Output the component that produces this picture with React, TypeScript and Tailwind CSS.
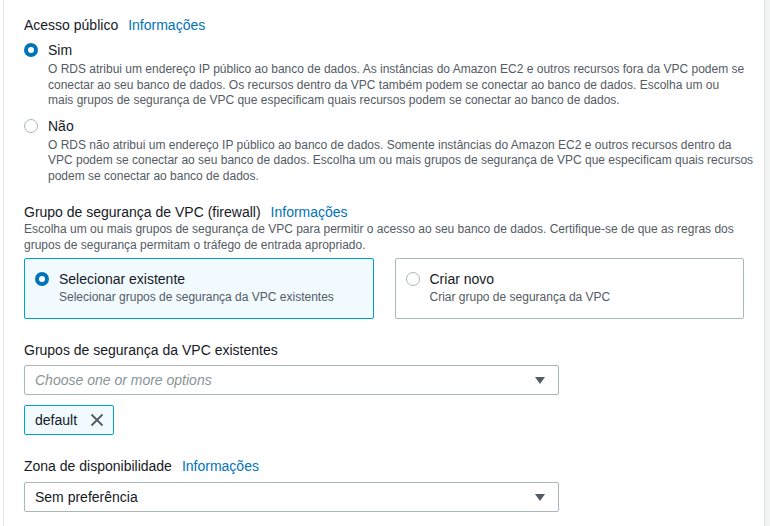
import React from 'react';

const font = { fontFamily: '"Liberation Sans", Arial, sans-serif' };

function Radio({ checked }: { checked: boolean }) {
  return checked ? (
    <span className="block h-[14px] w-[14px] shrink-0 rounded-full border-[4px] border-[#0073bb] bg-white" />
  ) : (
    <span className="block h-[14px] w-[14px] shrink-0 rounded-full border-[1.5px] border-[#aab7b8] bg-white" />
  );
}

function Info() {
  return <a className="ml-[10px] text-[#0073bb]">Informações</a>;
}

function Caret() {
  return (
    <svg width="10" height="7" viewBox="0 0 10 7" className="shrink-0">
      <path d="M0 0 H10 L5 7 Z" fill="#545b64" />
    </svg>
  );
}

export default function App() {
  return (
    <div className="flex h-[526px] w-[770px] overflow-hidden bg-white text-[#16191f]" style={font}>
      <div className="w-[3px] shrink-0 bg-white" />
      <div className="flex w-[762px] shrink-0 flex-col border-x border-[#e1e4e4] pl-[20px] pt-[15px]">
        {/* Acesso público */}
        <div className="text-[14px] leading-[20px]">
          Acesso público<Info />
        </div>
        <div className="mt-[5px] flex flex-col">
          <div className="flex items-start gap-[10px]">
            <div className="flex pt-[3px]"><Radio checked /></div>
            <div>
              <div className="text-[14px] leading-[20px]">Sim</div>
              <div className="mt-[2px] whitespace-nowrap text-[12px] leading-[15.5px] text-[#545b64]">
                O RDS atribui um endereço IP público ao banco de dados. As instâncias do Amazon EC2 e outros recursos fora da VPC podem se<br />
                conectar ao seu banco de dados. Os recursos dentro da VPC também podem se conectar ao banco de dados. Escolha um ou<br />
                mais grupos de segurança de VPC que especificam quais recursos podem se conectar ao banco de dados.
              </div>
            </div>
          </div>
          <div className="mt-[7px] flex items-start gap-[10px]">
            <div className="flex pt-[3px]"><Radio checked={false} /></div>
            <div>
              <div className="text-[14px] leading-[20px]">Não</div>
              <div className="mt-[2px] whitespace-nowrap text-[12px] leading-[15.5px] text-[#545b64]">
                O RDS não atribui um endereço IP público ao banco de dados. Somente instâncias do Amazon EC2 e outros recursos dentro da<br />
                VPC podem se conectar ao seu banco de dados. Escolha um ou mais grupos de segurança de VPC que especificam quais recursos<br />
                podem se conectar ao banco de dados.
              </div>
            </div>
          </div>
        </div>

        {/* Grupo de segurança */}
        <div className="mt-[18px] text-[14px] leading-[20px]">
          Grupo de segurança de VPC (firewall)<Info />
        </div>
        <div className="whitespace-nowrap text-[12px] leading-[15.5px] text-[#545b64]">
          Escolha um ou mais grupos de segurança de VPC para permitir o acesso ao seu banco de dados. Certifique-se de que as regras dos<br />
          grupos de segurança permitam o tráfego de entrada apropriado.
        </div>
        <div className="mt-[5px] grid w-[720px] grid-cols-2 gap-[21px]">
          <div className="flex h-[61px] items-start gap-[10px] rounded-[2px] border border-[#00a1c9] bg-[#f1faff] px-[10px] pt-[10px]">
            <div className="flex pt-[3px]"><Radio checked /></div>
            <div>
              <div className="text-[14px] leading-[20px]">Selecionar existente</div>
              <div className="text-[12px] leading-[16px] text-[#545b64]">Selecionar grupos de segurança da VPC existentes</div>
            </div>
          </div>
          <div className="flex h-[61px] items-start gap-[10px] rounded-[2px] border border-[#aab7b8] bg-white px-[10px] pt-[10px]">
            <div className="flex pt-[3px]"><Radio checked={false} /></div>
            <div>
              <div className="text-[14px] leading-[20px]">Criar novo</div>
              <div className="text-[12px] leading-[16px] text-[#545b64]">Criar grupo de segurança da VPC</div>
            </div>
          </div>
        </div>

        {/* Grupos existentes */}
        <div className="mt-[21px] text-[14px] leading-[20px]">Grupos de segurança da VPC existentes</div>
        <div className="mt-[5px] flex h-[30px] w-[535px] items-center justify-between rounded-[2px] border border-[#aab7b8] pl-[10px] pr-[13px]">
          <span className="text-[14px] italic text-[#879596]">Choose one or more options</span>
          <Caret />
        </div>
        <div className="mt-[10px] flex">
          <div className="flex h-[30px] items-center gap-[13px] rounded-[2px] border border-[#00a1c9] bg-[#f1faff] pl-[10px] pr-[9px]">
            <span className="text-[14px]">default</span>
            <svg width="14" height="14" viewBox="0 0 14 14">
              <path d="M1.5 1.5 L12.5 12.5 M12.5 1.5 L1.5 12.5" stroke="#545b64" strokeWidth="1.8" />
            </svg>
          </div>
        </div>

        {/* Zona */}
        <div className="mt-[21px] text-[14px] leading-[20px]">
          Zona de disponibilidade<Info />
        </div>
        <div className="mt-[6px] flex h-[30px] w-[535px] items-center justify-between rounded-[2px] border border-[#aab7b8] pl-[10px] pr-[13px]">
          <span className="text-[14px]">Sem preferência</span>
          <Caret />
        </div>
      </div>
      <div className="flex-1 bg-[#f2f3f3]" />
    </div>
  );
}
